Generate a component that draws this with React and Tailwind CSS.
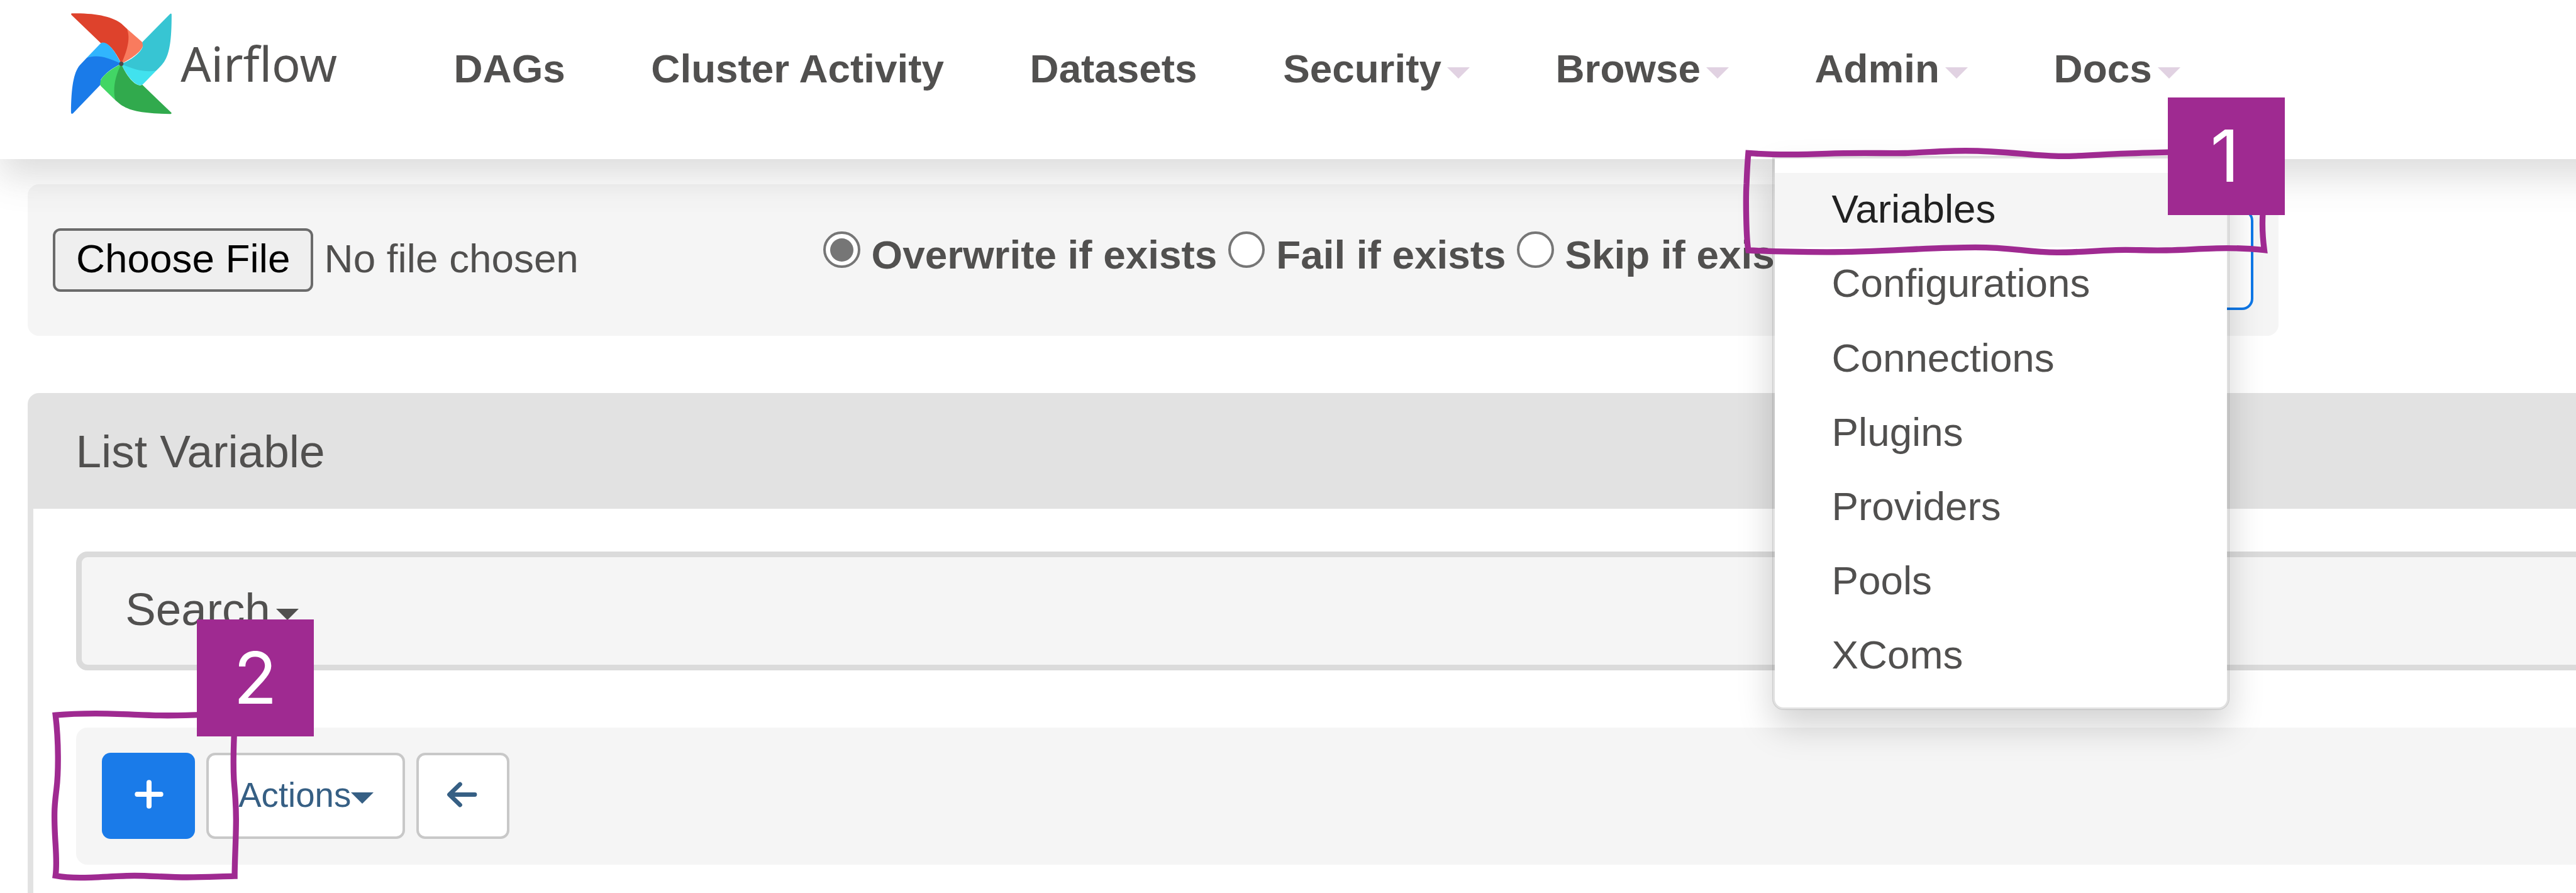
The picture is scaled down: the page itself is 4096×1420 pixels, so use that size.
const navItems = [
  { label: "DAGs" },
  { label: "Cluster Activity" },
  { label: "Datasets" },
  { label: "Security", menu: true },
  { label: "Browse", menu: true },
  { label: "Admin", menu: true },
  { label: "Docs", menu: true },
];

const adminMenu = ["Variables", "Configurations", "Connections", "Plugins", "Providers", "Pools", "XComs"];

function Caret({ className }) {
  return (
    <svg viewBox="0 0 36 18" className={`h-[18px] w-[36px] shrink-0 ${className}`} fill="currentColor">
      <path d="M0 0h36L18 18z" />
    </svg>
  );
}

function Pinwheel() {
  return (
    <svg viewBox="120 64 524 524" className="mt-[19.8px] h-[161.8px] w-[161.8px] shrink-0">
      <path fill="#f97b5e" d="M411 147L488 215Q496 222 493 236C487 264 436 300 382 328Z" />
      <path fill="#de422c" d="M126 68C250 65 340 85 384 122L411 147C428 190 419 245 382 328C350 258 315 222 285 219L277 222L126 77C123 74 123 70 126 68Z" />
      <path fill="#31b5fd" d="M203 298L272 226Q279 218 291 219C320 222 352 268 382 328Z" />
      <path fill="#1a7be9" d="M203 298C255 278 310 294 382 328C330 350 295 383 277 408L277 433L134 582Q124 590 123 578C124 450 136 373 168 335Z" />
      <path fill="#42d665" d="M351 515L278 444Q271 436 274 422C279 391 330 354 382 328Z" />
      <path fill="#31aa4d" d="M382 328C412 396 450 438 480 439L490 436L640 580Q642 587 632 586C505 583 430 575 376 536L351 515C338 462 347 398 382 328Z" />
      <path fill="#41e2ee" d="M562 363L494 432Q488 439 476 438C448 435 407 386 382 328Z" />
      <path fill="#37c5d3" d="M382 328C445 305 490 260 493 236L490 216L632 72Q642 64 641 78C641 200 632 275 602 318Q588 338 562 363C510 371 455 363 382 328Z" />
      <circle cx="382" cy="328" r="11" fill="#4c4b4a" />
    </svg>
  );
}

function NavBar() {
  return (
    <nav className="relative z-10 flex h-[252.5px] shrink-0 items-start bg-white shadow-[0_27px_55px_rgba(81,80,78,0.2)] mr-[-120px]">
      <div className="flex w-[721.5px] shrink-0 items-start gap-[13.6px] pl-[111.8px]">
        <Pinwheel />
        <span className="h-[201px] text-[75.8px] leading-[201px] [font-family:'Noto_Sans',sans-serif]">
          Airflow
        </span>
      </div>
      <div className="flex h-[218.4px] items-center gap-[136.6px]">
        {navItems.map((item) => (
          <div key={item.label} className="flex items-center gap-[9px] text-[63.8px] leading-[92px] font-bold whitespace-nowrap">
            <span>{item.label}</span>
            {item.menu && <Caret className="mt-[14px] text-[#e1d2e2]" />}
          </div>
        ))}
      </div>
    </nav>
  );
}

function Radio({ label, checked }) {
  return (
    <div className="flex h-full items-start gap-[17.8px]">
      <span className="mt-[74.8px] flex size-[58.6px] shrink-0 items-center justify-center rounded-full border-[4px] border-[#767676] bg-white">
        {checked && <span className="size-[37px] rounded-full bg-[#767676]" />}
      </span>
      <span className="mt-[65.6px] text-[63.8px] leading-[92px] font-bold whitespace-nowrap">{label}</span>
    </div>
  );
}

function ImportForm() {
  return (
    <section className="mt-[40.6px] ml-[43.8px] flex h-[241px] w-[3579.4px] shrink-0 items-start rounded-[18px] bg-[#f5f5f5] pr-[40.6px] pl-[40.4px]">
      <div className="flex w-[1225px] shrink-0 items-start gap-[17.4px] pt-[70px]">
        <button className="h-[100.6px] w-[414px] rounded-[12px] border-[4px] border-[#6b6b6b] bg-[#efefef] pb-[4px] text-[63.8px] leading-[88px] whitespace-nowrap text-black">
          Choose File
        </button>
        <span className="text-[63.8px] leading-[97px] whitespace-nowrap">No file chosen</span>
      </div>
      <div className="flex h-full items-start gap-[17.6px]">
        <Radio label="Overwrite if exists" checked />
        <Radio label="Fail if exists" />
        <Radio label="Skip if exists" />
      </div>
      <button aria-label="Import" className="mt-[39.6px] ml-auto h-[160.5px] w-[560px] rounded-[18px] border-[4.6px] border-[#0f78e8] bg-white" />
    </section>
  );
}

function ListPanel() {
  return (
    <section className="mt-[91px] mr-[-120px] ml-[43.9px] flex h-[1000px] shrink-0 flex-col rounded-[18px] border-[9px] border-[#e2e2e2] bg-white">
      <header className="flex h-[174.8px] shrink-0 items-center bg-[#e2e2e2] pb-[7px] pl-[67.5px] text-[73px] leading-[100px]">
        List Variable
      </header>
      <div className="mt-[68.4px] ml-[68px] flex h-[189px] shrink-0 items-center gap-[9px] rounded-[18px] border-[9px] border-[#dbdbdb] bg-[#f5f5f5] pb-[5px] pl-[69.3px] text-[72.8px] leading-[100px]">
        <span>Search</span>
        <Caret className="mt-[16px]" />
      </div>
      <div className="mt-[90.4px] ml-[67.7px] flex h-[218.7px] shrink-0 items-start gap-[18px] rounded-[18px] bg-[#f5f5f5] pt-[40.6px] pl-[41px]">
        <button aria-label="Add" className="flex h-[137px] w-[148.6px] items-center justify-center rounded-[14px] bg-[#1a7be9] pb-[5px] pl-[2px] text-white">
          <svg viewBox="0 0 46 46" className="size-[46px]" stroke="currentColor" strokeWidth="8" strokeLinecap="round">
            <path d="M23 4.3v37.4M4.3 23h37.4" />
          </svg>
        </button>
        <button className="flex h-[137px] w-[316px] items-center rounded-[14px] border-[4px] border-[#c8c8c8] bg-white pb-[1px] pl-[47px] text-[54.6px] leading-[78px] text-[#365f84]">
          <span>Actions</span>
          <Caret className="mt-[8px]" />
        </button>
        <button aria-label="Back" className="flex h-[137px] w-[147.4px] items-center justify-center rounded-[14px] border-[4px] border-[#c8c8c8] bg-white pr-[2px] pb-[5px] text-[#365f84]">
          <svg viewBox="0 0 49 41" className="h-[41px] w-[49px]" fill="none" stroke="currentColor" strokeWidth="6.8" strokeLinecap="round" strokeLinejoin="round">
            <path d="M21.5 4L4.5 20.5L21.5 37M5 20.5h40" />
          </svg>
        </button>
      </div>
    </section>
  );
}

function AdminMenu() {
  return (
    <div className="absolute top-[248.4px] left-[2817.6px] z-20 w-[727px] rounded-b-[18px] border-[4px] border-black/12 bg-white bg-clip-padding py-[22.8px] shadow-[0_27px_55px_rgba(0,0,0,0.175)]">
      {adminMenu.map((label, i) => (
        <div
          key={label}
          className={`h-[118.2px] pl-[91px] text-[63.7px] leading-[113.6px] ${i === 0 ? "bg-[#f5f5f5] text-[#212121]" : ""}`}
        >
          {label}
        </div>
      ))}
    </div>
  );
}

function Badge({ children, className }) {
  return (
    <div className={`absolute z-40 flex size-[186.2px] items-center justify-center bg-[#9f2a91] text-[114px] leading-[186px] text-white [font-family:Inter,Roboto,sans-serif] ${className}`}>
      {children}
    </div>
  );
}

function Annotations() {
  return (
    <>
      <svg viewBox="0 0 2800 640" className="absolute top-[223.4px] left-[2755.5px] z-30 h-[198.6px] w-[868.9px]" fill="none" stroke="#9f2a91" strokeWidth="30">
        <path d="M77 66C180 74 350 74 480 69C640 62 780 68 880 66C1000 62 1080 54 1190 54C1400 54 1540 82 1685 82C1800 82 1900 71 2010 68C2200 63 2400 54 2713 55V380C2709 450 2714 510 2721 563C2660 556 2590 553 2530 553C2420 553 2330 562 2220 564C2130 566 2080 562 2010 562C1900 562 1780 575 1660 575C1500 575 1440 549 1240 549C1000 549 760 573 480 573C330 573 200 570 77 564C66 500 63 300 68 220Q72 120 77 66Z" />
      </svg>
      <svg viewBox="0 0 1060 980" className="absolute top-[1112.4px] left-[65.2px] z-30 h-[304.1px] w-[328.9px]" fill="none" stroke="#9f2a91" strokeWidth="30">
        <path d="M75 81C130 76 200 73 280 73C420 73 530 83 650 83C760 83 880 76 990 76V189C988 240 985 330 989 410C994 480 1002 540 1000 640C999 740 993 830 993 906C910 908 840 912 750 912C650 912 560 904 480 904C390 904 290 914 200 914Q130 914 75 904C84 840 76 770 72 690C66 560 72 530 80 460C90 380 92 220 75 81Z" />
      </svg>
      <Badge className="top-[155.4px] left-[3447.2px] pr-[5px]">1</Badge>
      <Badge className="top-[984.9px] left-[312.8px]">2</Badge>
    </>
  );
}

export default function App() {
  return (
    <div className="relative flex h-[1420px] w-[4096px] flex-col overflow-hidden bg-white text-[#51504f] [font-family:'Liberation_Sans',Arial,sans-serif]">
      <NavBar />
      <ImportForm />
      <ListPanel />
      <AdminMenu />
      <Annotations />
    </div>
  );
}
